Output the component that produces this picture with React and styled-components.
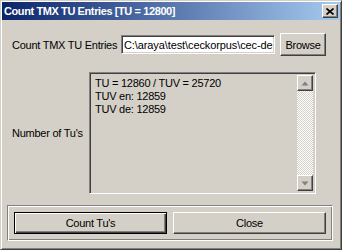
import React from "react";
import styled, { createGlobalStyle } from "styled-components";

const GlobalStyle = createGlobalStyle`
  body {
    margin: 0;
    background: #d4d0c8;
    font-family: "Liberation Sans", Arial, sans-serif;
    font-size: 11px;
    letter-spacing: -0.25px;
  }
`;

const Window = styled.div`
  box-sizing: border-box;
  width: 342px;
  height: 250px;
  padding: 1px;
  background: #d4d0c8;
  border: 1px solid;
  border-color: #d4d0c8 #404040 #404040 #d4d0c8;
  box-shadow: inset 1px 1px #fff, inset -1px -1px #808080;
  display: flex;
  flex-direction: column;
`;

const TitleBar = styled.div`
  height: 18px;
  display: flex;
  align-items: center;
  justify-content: space-between;
  padding: 0 2px 0 2px;
  background: linear-gradient(to right, #0a246a, #a6caf0);
  color: #fff;
  font-weight: bold;
  font-size: 11px;
  letter-spacing: -0.4px;
  white-space: nowrap;
`;

const CloseButton = styled.div`
  box-sizing: border-box;
  width: 16px;
  height: 14px;
  display: flex;
  align-items: center;
  justify-content: center;
  background: #d4d0c8;
  border: 1px solid;
  border-color: #fff #404040 #404040 #fff;
  box-shadow: inset -1px -1px #808080;
`;

const Content = styled.div`
  flex: 1;
  display: flex;
  flex-direction: column;
  padding: 13px 7px 0 5px;
  color: #000;
`;

const Row = styled.div`
  display: flex;
  align-items: center;
  margin-top: ${(p) => p.$top || 0}px;
`;

const Label = styled.div`
  width: ${(p) => p.$width}px;
  padding-left: 5px;
  box-sizing: border-box;
  white-space: nowrap;
`;

const Sunken = styled.div`
  box-sizing: border-box;
  border: 1px solid;
  border-color: #808080 #fff #fff #808080;
  box-shadow: inset 1px 1px #404040, inset -1px -1px #d4d0c8;
`;

const Field = styled(Sunken)`
  width: 154px;
  height: 19px;
  background: #fff;
  padding: 2px 0 0 2px;
  overflow: hidden;
  white-space: nowrap;
  line-height: 14px;
  letter-spacing: -0.1px;
`;

const Button = styled.div`
  box-sizing: border-box;
  width: ${(p) => p.$width}px;
  height: ${(p) => p.$height}px;
  margin-left: ${(p) => p.$gap || 0}px;
  display: flex;
  align-items: center;
  justify-content: center;
  background: #d4d0c8;
  border: 1px solid;
  border-color: ${(p) =>
    p.$default ? "#000" : "#fff #404040 #404040 #fff"};
  box-shadow: ${(p) =>
    p.$default
      ? "inset 1px 1px #fff, inset -1px -1px #404040, inset -2px -2px #808080"
      : "inset -1px -1px #808080, inset 1px 1px #d4d0c8"};
  white-space: nowrap;
`;

const ListBox = styled(Sunken)`
  width: 227px;
  height: 122px;
  display: flex;
  background: #d4d0c8;
  padding: 2px;
`;

const ListText = styled.div`
  flex: 1;
  padding: 2px 3px;
  line-height: 13px;
`;

const ScrollBar = styled.div`
  width: 16px;
  display: flex;
  flex-direction: column;
  background: repeating-conic-gradient(#fff 0 25%, #d4d0c8 0 50%) 0 0 / 2px 2px;
`;

const ScrollButton = styled.div`
  box-sizing: border-box;
  width: 16px;
  height: 16px;
  display: flex;
  align-items: center;
  justify-content: center;
  background: #d4d0c8;
  border: 1px solid;
  border-color: #fff #404040 #404040 #fff;
  box-shadow: inset -1px -1px #808080;
`;

const Track = styled.div`
  flex: 1;
`;

const GroupBox = styled.div`
  box-sizing: border-box;
  margin-top: 11px;
  height: 36px;
  display: flex;
  align-items: center;
  gap: 6px;
  padding: 0 5px 0 6px;
  border: 1px solid;
  border-color: #808080 #fff #fff #808080;
  box-shadow: inset 1px 1px #fff, inset -1px -1px #808080;
`;

const Arrow = ({ up }) => (
  <svg width="8" height="5" viewBox="0 0 8 5">
    <polygon
      points={up ? "4,0.5 7.5,4.5 0.5,4.5" : "0.5,0.5 7.5,0.5 4,4.5"}
      fill="#808080"
    />
  </svg>
);

export default function App() {
  return (
    <>
      <GlobalStyle />
      <Window>
        <TitleBar>
          <span>Count TMX TU Entries [TU = 12800]</span>
          <CloseButton>
            <svg width="8" height="7" viewBox="0 0 8 7">
              <path
                d="M0.5 0.5 L7.5 6.5 M7.5 0.5 L0.5 6.5"
                stroke="#000"
                strokeWidth="1.6"
              />
            </svg>
          </CloseButton>
        </TitleBar>
        <Content>
          <Row>
            <Label $width={114}>Count TMX TU Entries</Label>
            <Field>C:\araya\test\ceckorpus\cec-de</Field>
            <Button $width={46} $height={23} $gap={5}>
              Browse
            </Button>
          </Row>
          <Row $top={16}>
            <Label $width={82}>Number of Tu's</Label>
            <ListBox>
              <ListText>
                TU = 12860 / TUV = 25720
                <br />
                TUV en: 12859
                <br />
                TUV de: 12859
              </ListText>
              <ScrollBar>
                <ScrollButton>
                  <Arrow up />
                </ScrollButton>
                <Track />
                <ScrollButton>
                  <Arrow />
                </ScrollButton>
              </ScrollBar>
            </ListBox>
          </Row>
          <GroupBox>
            <Button $width={153} $height={22} $default>
              Count Tu's
            </Button>
            <Button $width={153} $height={22}>
              Close
            </Button>
          </GroupBox>
        </Content>
      </Window>
    </>
  );
}
